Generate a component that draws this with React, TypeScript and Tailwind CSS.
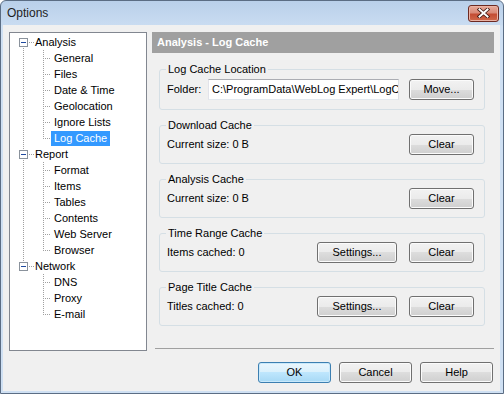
import React from 'react';

type Node = { label: string; children: string[] };

const tree: Node[] = [
  { label: 'Analysis', children: ['General', 'Files', 'Date & Time', 'Geolocation', 'Ignore Lists', 'Log Cache'] },
  { label: 'Report', children: ['Format', 'Items', 'Tables', 'Contents', 'Web Server', 'Browser'] },
  { label: 'Network', children: ['DNS', 'Proxy', 'E-mail'] },
];

const LINE = '#a0a0a0';

function RootGutter({ first, last }: { first: boolean; last: boolean }) {
  return (
    <svg width="24" height="16" className="shrink-0" shapeRendering="crispEdges">
      {!first && <line x1="13.5" y1="0" x2="13.5" y2="4" stroke={LINE} strokeDasharray="1 1" />}
      {!last && <line x1="13.5" y1="14" x2="13.5" y2="16" stroke={LINE} strokeDasharray="1 1" />}
      <rect x="9.5" y="4.5" width="8" height="8" fill="#ffffff" stroke="#8a929c" />
      <line x1="11" y1="8.5" x2="16" y2="8.5" stroke="#1f4aa0" />
      <line x1="19" y1="8.5" x2="24" y2="8.5" stroke={LINE} strokeDasharray="1 1" />
    </svg>
  );
}

function ChildGutter({ parentLast, last }: { parentLast: boolean; last: boolean }) {
  return (
    <svg width="41" height="16" className="shrink-0" shapeRendering="crispEdges">
      {!parentLast && <line x1="13.5" y1="0" x2="13.5" y2="16" stroke={LINE} strokeDasharray="1 1" />}
      <line x1="33.5" y1="0" x2="33.5" y2={last ? 9 : 16} stroke={LINE} strokeDasharray="1 1" />
      <line x1="35" y1="8.5" x2="41" y2="8.5" stroke={LINE} strokeDasharray="1 1" />
    </svg>
  );
}

function Tree() {
  return (
    <div className="w-[138px] h-full shrink-0 border border-[#828790] bg-white pt-[1px] pl-0">
      {tree.map((n, i) => {
        const first = i === 0;
        const last = i === tree.length - 1;
        return (
          <div key={n.label}>
            <div className="flex h-[16px] items-center">
              <RootGutter first={first} last={last} />
              <span className="pl-[1px] pr-[3px] leading-[14px] whitespace-nowrap">{n.label}</span>
            </div>
            {n.children.map((c, j) => {
              const sel = c === 'Log Cache';
              return (
                <div key={c} className="flex h-[16px] items-center">
                  <ChildGutter parentLast={last} last={j === n.children.length - 1} />
                  {sel ? (
                    <span className="px-[3px] h-[15px] leading-[15px] whitespace-nowrap bg-[#3399ff] text-white">{c}</span>
                  ) : (
                    <span className="px-[3px] h-[15px] leading-[15px] whitespace-nowrap">{c}</span>
                  )}
                </div>
              );
            })}
          </div>
        );
      })}
    </div>
  );
}

function Btn({ children, className }: { children: React.ReactNode; className: string }) {
  return (
    <div
      className={
        'h-[21px] shrink-0 flex items-center justify-center rounded-[3px] border border-[#707070] bg-[linear-gradient(#f2f2f2,#ebebeb_50%,#dddddd_50%,#cfcfcf)] shadow-[inset_0_0_0_1px_#fbfbfb] leading-none ' +
        className
      }
    >
      {children}
    </div>
  );
}

function Group({ title, h, children }: { title: string; h: string; children: React.ReactNode }) {
  return (
    <div className={'relative border border-[#d5dfe5] rounded-[3px] flex items-center pl-[7px] pr-[10px] ' + h}>
      <div className="absolute -top-[7px] left-[6px] px-[2px] bg-[#f0f0f0] leading-[13px] whitespace-nowrap">{title}</div>
      {children}
    </div>
  );
}

function RightPanel() {
  return (
    <div className="w-[342px] shrink-0 flex flex-col">
      <div className="h-[21px] bg-[#a0a0a0] text-white font-bold pl-[5px] flex items-center">Analysis - Log Cache</div>
      <div className="mt-[16px] ml-[7px] w-[326px] flex flex-col gap-[15px]">
        <Group title="Log Cache Location" h="h-[41px]">
          <span>Folder:</span>
          <div className="ml-auto w-[191px] h-[21px] border border-[#abadb3] border-l-[#e2e3ea] border-r-[#dbdfe6] border-b-[#e3e9ef] bg-white flex items-center pl-[3px] overflow-hidden whitespace-nowrap">
            {'C:\\ProgramData\\WebLog Expert\\LogCache'}
          </div>
          <Btn className="ml-[10px] w-[65px]">Move...</Btn>
        </Group>
        <Group title="Download Cache" h="h-[39px]">
          <span>Current size: 0 B</span>
          <Btn className="ml-auto w-[65px]">Clear</Btn>
        </Group>
        <Group title="Analysis Cache" h="h-[39px]">
          <span>Current size: 0 B</span>
          <Btn className="ml-auto w-[65px]">Clear</Btn>
        </Group>
        <Group title="Time Range Cache" h="h-[39px]">
          <span>Items cached: 0</span>
          <Btn className="ml-auto w-[80px]">Settings...</Btn>
          <Btn className="ml-[12px] w-[65px]">Clear</Btn>
        </Group>
        <Group title="Page Title Cache" h="h-[39px]">
          <span>Titles cached: 0</span>
          <Btn className="ml-auto w-[80px]">Settings...</Btn>
          <Btn className="ml-[12px] w-[65px]">Clear</Btn>
        </Group>
      </div>
      <div className="flex-1" />
      <div className="ml-[3px] border-t border-[#a0a0a0] mb-[2px]" />
    </div>
  );
}

function CloseBtn() {
  return (
    <div className="w-[31px] h-[17px] rounded-[3px] border border-[#6d2a22] bg-[linear-gradient(#e8aa9a,#d98a78_45%,#c44d34_55%,#d0694b)] shadow-[inset_0_0_0_1px_#eab3a5] flex items-center justify-center">
      <svg width="13" height="10" viewBox="0 0 13 10">
        <path d="M2.5 1.5 L10.5 8.5 M10.5 1.5 L2.5 8.5" stroke="#3b1510" strokeWidth="3.6" strokeLinecap="square" />
        <path d="M2.5 1.5 L10.5 8.5 M10.5 1.5 L2.5 8.5" stroke="#ffffff" strokeWidth="2" strokeLinecap="square" />
      </svg>
    </div>
  );
}

export default function App() {
  return (
    <div className="w-[504px] h-[394px] overflow-hidden font-['Liberation_Sans',Arial,sans-serif] text-[11px] text-black">
      <div className="w-full h-full flex flex-col rounded-t-[6px] border border-[#5b6d84] bg-[linear-gradient(to_bottom,#b9d0ea_0px,#c9dcf1_24px,#cfe0f3_25px,#cfe0f3)] pl-[2px] pr-[3px] pb-[2px]">
        <div className="h-[24px] shrink-0 flex items-center justify-between pl-[4px] pr-[1px]">
          <span className="text-[12px] text-[#1e1e1e] leading-none">Options</span>
          <CloseBtn />
        </div>
        <div className="flex-1 bg-[#f0f0f0] flex flex-col pt-[7px] pl-[6px] pr-[6px] pb-[8px]">
          <div className="flex h-[319px] gap-[5px]">
            <Tree />
            <RightPanel />
          </div>
          <div className="mt-[11px] flex justify-end gap-[8px] pr-[1px]">
            <div className="w-[73px] h-[21px] flex items-center justify-center rounded-[3px] border border-[#3c7fb1] bg-[linear-gradient(#eaf6fd,#d9f0fc_50%,#bee6fd_50%,#a7d9f5)] shadow-[inset_0_0_0_1px_#c9e9fb] leading-none">
              OK
            </div>
            <Btn className="w-[73px]">Cancel</Btn>
            <Btn className="w-[73px]">Help</Btn>
          </div>
        </div>
      </div>
    </div>
  );
}
